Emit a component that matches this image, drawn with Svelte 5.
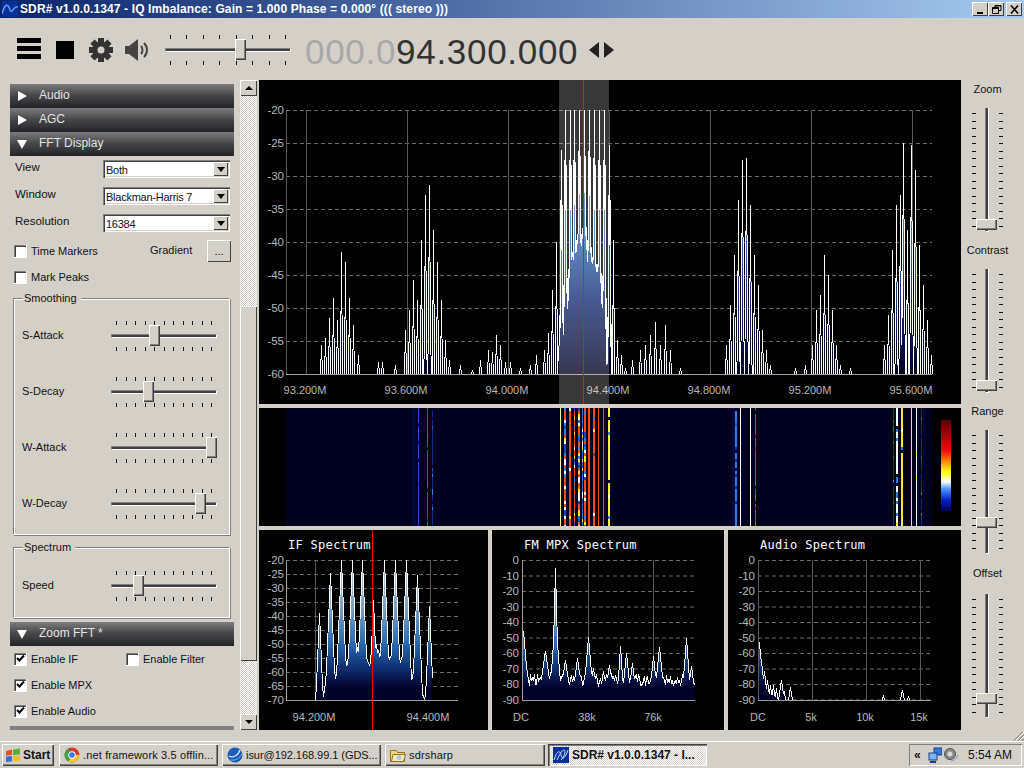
<script>
	// small seeded random so the plots stay the same on every load
	function rng(seed) {
		let s = seed;
		return () => {
			s = (s * 16807) % 2147483647;
			return s / 2147483647;
		};
	}

	function trace(x0, x1, top, base, peaks, floor, noise, seed, slope = 150) {
		const r = rng(seed);
		const pts = [];
		for (let x = x0; x <= x1; x++) {
			const f = floor(x);
			let y = f >= base ? f : f + (r() - 0.5) * noise;
			for (const [px, py, sl] of peaks) {
				y = Math.min(y, py + Math.abs(x - px) * (sl ?? slope));
			}
			pts.push([x, Math.max(top, Math.min(base, y))]);
		}
		return pts;
	}
	const line = (pts) => pts.map((p) => p[0] + 0.5 + ',' + Math.round(p[1])).join(' ');
	const area = (pts, base) =>
		pts[0][0] + ',' + base + ' ' + line(pts) + ' ' + pts[pts.length - 1][0] + ',' + base;

	function lerp(stops, x) {
		if (x <= stops[0][0] || x >= stops[stops.length - 1][0]) return 999;
		for (let i = 1; i < stops.length; i++) {
			if (x <= stops[i][0]) {
				const [a, b] = [stops[i - 1], stops[i]];
				return a[1] + ((b[1] - a[1]) * (x - a[0])) / (b[0] - a[0]);
			}
		}
		return 999;
	}

	// main spectrum, coordinates are relative to the plot box (x - 259, y - 80)
	const mainPeaks = [
		[321, 345], [325, 338], [329, 318], [333, 298], [337, 320], [341, 252], [345, 262], [349, 298],
		[353, 325], [358, 355], [378, 362], [382, 362], [395, 365], [405, 330], [409, 310], [413, 280],
		[417, 300], [421, 240], [425, 195], [429, 185], [433, 230], [437, 262], [441, 300], [445, 340],
		[449, 360], [460, 365], [472, 370], [480, 360], [488, 350], [492, 352], [496, 335], [500, 345],
		[505, 362], [510, 362], [520, 368], [530, 365], [536, 355], [544, 350], [548, 333], [552, 290],
		[556, 242], [561, 150], [565, 110], [570, 110], [574, 110], [579, 110], [584, 110], [589, 110],
		[594, 110], [599, 110], [604, 110], [609, 145], [613, 240], [617, 340], [621, 355], [625, 368],
		[632, 360], [640, 350], [645, 345], [650, 335], [655, 322], [660, 345], [665, 325], [670, 350],
		[680, 368], [726, 345], [730, 305], [734, 255], [738, 200], [742, 160], [746, 158], [750, 205],
		[754, 255], [758, 285], [762, 330], [766, 350], [770, 365], [795, 368], [805, 365], [812, 345],
		[816, 310], [820, 295], [824, 255], [828, 275], [832, 310], [836, 345], [840, 365], [850, 368],
		[884, 345], [888, 315], [892, 250], [896, 205], [900, 195], [903, 143], [907, 230], [911, 145],
		[915, 170], [919, 245], [923, 285], [927, 320], [931, 355]
	].map(([x, y]) => [x - 259, y - 80]);
	const mainFloor = (x) =>
		lerp([[298, 294], [302, 260], [306, 225], [311, 195], [316, 170], [324, 158], [331, 170], [336, 190], [341, 225], [346, 260], [350, 294]], x);
	const mainTrace = trace(27, 673, 30, 294, mainPeaks, mainFloor, 34, 77);
	const centerTrace = mainTrace.filter((p) => p[0] >= 300 && p[0] <= 352);

	const ifPeaks = [
		[60, 83], [71, 43], [82, 30], [93, 30], [103, 30], [114, 70], [125, 30], [136, 30], [147, 30], [158, 45], [170, 76]
	].map(([x, y]) => [x, y, 24]);
	const ifFloor = (x) =>
		lerp([[58, 170], [59, 126], [64, 165], [68, 148], [76, 151], [79, 121], [87, 133], [98, 120], [106, 128], [112, 135],
			[116, 115], [121, 128], [131, 126], [141, 133], [144, 121], [151, 148], [159, 151], [162, 161], [167, 170], [169, 130], [171, 170]], x);
	const ifTrace = trace(56, 173, 30, 170, ifPeaks, ifFloor, 7, 31);

	// mpx and audio peaks were read from a 3x crop, so z / 3 gives plot pixels
	const mpxPeaks = [
		[100, 310, 12], [105, 390, 8], [165, 370, 7], [195, 120, 40], [195, 260, 14], [225, 395, 7], [262, 390, 8], [293, 328, 12],
		[310, 420, 7], [340, 430, 7], [358, 410, 7], [390, 355, 16], [408, 375, 10], [427, 405, 9], [445, 440, 7], [470, 445, 7],
		[490, 385, 10], [507, 358, 10], [520, 450, 7], [540, 445, 7], [560, 448, 7], [587, 330, 14], [603, 415, 8]
	].map(([z, y, s]) => [Math.round(z / 3 - 2), y / 3 - 2, s]);
	const mpxTrace = trace(30, 202, 30, 170, mpxPeaks, () => 150, 13, 53);

	const audioPeaks = [
		[105, 343, 14], [110, 400, 9], [120, 430, 9], [130, 455, 9], [137, 470, 9], [148, 472, 9], [155, 480, 9],
		[170, 455, 7], [180, 490, 9], [198, 478, 7], [478, 500, 5], [533, 487, 5], [553, 505, 5]
	].map(([z, y, s]) => [Math.round(z / 3 - 4), y / 3 - 2, s]);
	const audioTrace = trace(31, 202, 30, 170, audioPeaks, () => 180, 0, 11);

	const mainDb = [-20, -25, -30, -35, -40, -45, -50, -55, -60];
	const mainFreq = ['93.200M', '93.600M', '94.000M', '94.400M', '94.800M', '95.200M', '95.600M'];
	const ifDb = [-20, -25, -30, -35, -40, -45, -50, -55, -60, -65, -70];
	const mpxDb = [0, -10, -20, -30, -40, -50, -60, -70, -80, -90];

	const hot = ['#ffffff', '#2c80e0', '#ffe820', '#1848c0', '#ffffff', '#2c80e0'];
	const cold = ['#2c80e0', '#0a2f9a', '#000040', '#1c5cc4'];
	const pale = ['#ffffff', '#00001f', '#ffe820', '#2c80e0'];

	// waterfall stripes: x, width, colour, noise amount, noise colours
	const stripes = [
		[412, 4, '#00083a', 0, cold], [418, 1, '#1a4fd0', 0.25, cold], [427, 1, '#1c5cc4', 0.25, cold], [432, 1, '#0c2a90', 0.25, cold],
		[560, 1, '#fff6a0', 0, hot], [564, 2, '#ff4a10', 0.55, hot], [569, 2, '#ff4a10', 0.12, hot], [574, 1, '#ff4a10', 0.4, hot],
		[578, 2, '#e8581c', 0.75, hot], [582, 1, '#2c6ed0', 0.5, hot], [584, 2, '#ff4a10', 0.35, hot], [588, 2, '#ff4a10', 0, hot],
		[593, 2, '#ff4a10', 0.12, hot], [598, 1, '#ff4a10', 0, hot], [603, 1, '#ff4a10', 0, hot], [608, 2, '#ffff30', 0.12, pale],
		[732, 3, '#00083a', 0, cold], [735, 2, '#2c80e0', 0.35, cold], [740, 1, '#ffffff', 0, cold], [750, 1, '#ffffff', 0, cold],
		[755, 1, '#2070d8', 0.3, cold], [893, 1, '#0c2a90', 0.2, cold], [896, 2, '#ffffff', 0.4, pale], [901, 2, '#ffe820', 0.15, pale],
		[911, 1, '#ffe820', 0, pale], [916, 1, '#f4f4ff', 0.1, pale], [921, 1, '#0c2a90', 0.2, cold]
	];
	const wfRand = rng(99);
	const speckles = [];
	for (const [x, w, , amount, colours] of stripes) {
		for (let y = 0; y < 118; y += 3) {
			if (wfRand() < amount) {
				speckles.push({ x: x - 259, y, w, c: colours[Math.floor(wfRand() * colours.length)] });
			}
		}
	}

	const vsliders = [
		{ name: 'Zoom', top: 111 },
		{ name: 'Contrast', top: 111 },
		{ name: 'Range', top: 87 },
		{ name: 'Offset', top: 99 }
	];
	const gearTeeth = [0, 45, 90, 135, 180, 225, 270, 315];
</script>

{#snippet hslider(left, width, count)}
	<div class="hslider" style="width:{width}px">
		<div class="ticks">{#each Array(count) as _}<i></i>{/each}</div>
		<div class="htrack"></div>
		<div class="ticks">{#each Array(count) as _}<i></i>{/each}</div>
		<div class="hthumb" style="left:{left}px"></div>
	</div>
{/snippet}

{#snippet combo(text)}
	<div class="combo">
		<span>{text}</span>
		<div class="combo-btn"><b></b></div>
	</div>
{/snippet}

{#snippet check(label, on)}
	<div class="check">
		<div class="box">
			{#if on}
				<svg width="9" height="9" viewBox="0 0 9 9"><path d="M1 4 L3.5 6.5 L8 1.5" fill="none" stroke="#000" stroke-width="2" /></svg>
			{/if}
		</div>
		<span>{label}</span>
	</div>
{/snippet}

{#snippet header(label, open)}
	<div class="panel-head">
		<svg width="12" height="12" viewBox="0 0 12 12">
			{#if open}
				<polygon points="1,2 11,2 6,11" fill="#fff" />
			{:else}
				<polygon points="2,1 11,6 2,11" fill="#fff" />
			{/if}
		</svg>
		<span>{label}</span>
	</div>
{/snippet}

<div class="app">
	<div class="titlebar">
		<svg class="appicon" width="16" height="16" viewBox="0 0 16 16">
			<rect width="16" height="16" fill="#0b2f9a" />
			<path d="M0 13 C3 2 6 2 8 9 C10 14 12 4 16 6" fill="none" stroke="#5aa0f0" stroke-width="1.5" />
		</svg>
		<span class="title">SDR# v1.0.0.1347 - IQ Imbalance: Gain = 1.000 Phase = 0.000° ((( stereo )))</span>
		<div class="winbtns">
			<div class="winbtn"><svg width="13" height="11"><rect x="3" y="8" width="6" height="2" fill="#000" /></svg></div>
			<div class="winbtn"><svg width="13" height="11"><path d="M5 3V1.5H11V6.5H9M2.5 3.5H8.5V9.5H2.5Z M5 2H11 M3 4.500H8" fill="none" stroke="#000" /></svg></div>
			<div class="winbtn close"><svg width="13" height="11"><path d="M3 1.500L10 9.500M10 1.500L3 9.500" stroke="#000" stroke-width="1.600" /></svg></div>
		</div>
	</div>

	<div class="toolbar">
		<svg class="hamburger" width="24" height="22" viewBox="0 0 24 22">
			<rect y="0" width="24" height="5" fill="#000" />
			<rect y="8" width="24" height="5" fill="#000" />
			<rect y="16" width="24" height="5" fill="#000" />
		</svg>
		<div class="stop"></div>
		<svg class="gear" width="24" height="24" viewBox="-12 -12 24 24">
			{#each gearTeeth as a}
				<rect x="-3" y="-12" width="6" height="6" fill="#333" transform="rotate({a})" />
			{/each}
			<circle r="8.500" fill="#333" />
			<circle r="3.500" fill="#d4d0c8" />
		</svg>
		<svg class="speaker" width="25" height="24" viewBox="0 0 25 24">
			<polygon points="0,8 4,8 13,1 13,23 4,16 0,16" fill="#444" />
			<path d="M16 8 C18 10 18 14 16 16" fill="none" stroke="#444" stroke-width="2" />
			<path d="M19 5 C23 9 23 15 19 19" fill="none" stroke="#444" stroke-width="2" />
		</svg>
		<div class="volume">{@render hslider(70, 126, 8)}</div>
		<div class="freq"><span class="freq-off">000.0</span>94.300.000</div>
		<svg class="arrows" width="25" height="16" viewBox="0 0 25 16">
			<polygon points="0,8 10,0 10,16" fill="#222" />
			<polygon points="25,8 15,0 15,16" fill="#222" />
		</svg>
	</div>

	<div class="body">
		<div class="side">
			{@render header('Audio', false)}
			{@render header('AGC', false)}
			{@render header('FFT Display', true)}
			<div class="fft-form">
				<div class="form-row"><label for="">View</label>{@render combo('Both')}</div>
				<div class="form-row"><label for="">Window</label>{@render combo('Blackman-Harris 7')}</div>
				<div class="form-row"><label for="">Resolution</label>{@render combo('16384')}</div>
				<div class="markers">
					{@render check('Time Markers', false)}
					<span class="gradient-label">Gradient</span>
					<div class="dots">...</div>
				</div>
				<div class="peaks">{@render check('Mark Peaks', false)}</div>
				<div class="group smoothing">
					<span class="legend">Smoothing</span>
					<div class="slide-row"><span>S-Attack</span>{@render hslider(38, 106, 11)}</div>
					<div class="slide-row"><span>S-Decay</span>{@render hslider(32, 106, 11)}</div>
					<div class="slide-row"><span>W-Attack</span>{@render hslider(95, 106, 11)}</div>
					<div class="slide-row"><span>W-Decay</span>{@render hslider(84, 106, 11)}</div>
				</div>
				<div class="group spectrum">
					<span class="legend">Spectrum</span>
					<div class="slide-row"><span>Speed</span>{@render hslider(22, 106, 11)}</div>
				</div>
			</div>
			{@render header('Zoom FFT *', true)}
			<div class="zoom-form">
				<div class="zoom-row">{@render check('Enable IF', true)}{@render check('Enable Filter', false)}</div>
				<div class="zoom-row">{@render check('Enable MPX', true)}</div>
				<div class="zoom-row">{@render check('Enable Audio', true)}</div>
			</div>
			<div class="next-head"></div>
		</div>

		<div class="scroll">
			<div class="scroll-btn"><b class="up"></b></div>
			<div class="scroll-gap first"></div>
			<div class="scroll-thumb"></div>
			<div class="scroll-gap"></div>
			<div class="scroll-btn"><b class="down"></b></div>
		</div>

		<div class="plots">
			<svg class="plot-main" width="702" height="324" viewBox="0 0 702 324">
				<defs>
					<linearGradient id="g-main" gradientUnits="userSpaceOnUse" x1="0" y1="30" x2="0" y2="294">
						<stop offset="0" stop-color="#b8d0e0" />
						<stop offset="0.48" stop-color="#2f70b4" />
						<stop offset="0.72" stop-color="#142c74" />
						<stop offset="1" stop-color="#000020" />
					</linearGradient>
					<linearGradient id="g-small" gradientUnits="userSpaceOnUse" x1="0" y1="30" x2="0" y2="170">
						<stop offset="0" stop-color="#c0d4e0" />
						<stop offset="0.35" stop-color="#7aa0c0" />
						<stop offset="0.6" stop-color="#2868b0" />
						<stop offset="0.77" stop-color="#0f3070" />
						<stop offset="0.91" stop-color="#02022e" />
						<stop offset="1" stop-color="#000028" />
					</linearGradient>
				</defs>
				{#each mainDb as d, i}
					<line class="hgrid" x1="27" x2="673" y1={30.5 + i * 33} y2={30.5 + i * 33} />
					<text class="tick" x="25" y={34 + i * 33} text-anchor="end">{d}</text>
				{/each}
				<line class="vgrid" x1="27.500" x2="27.500" y1="30" y2="294" />
				{#each mainFreq as f, i}
					<line class="vgrid" x1={47.5 + i * 101} x2={47.5 + i * 101} y1="30" y2="294" />
					<text class="tick small" x={46 + i * 101} y="314" text-anchor="middle">{f}</text>
				{/each}
				<polygon class="crisp" points={area(mainTrace, 294)} fill="url(#g-main)" />
				<polyline class="crisp" points={line(mainTrace)} fill="none" stroke="#fff" />
				<polyline class="crisp" points={line(centerTrace)} fill="none" stroke="#fff" stroke-width="1.300" />
				<line class="axis" x1="27" x2="673" y1="294.500" y2="294.500" />
				<rect x="300" y="0" width="50" height="324" fill="#fff" fill-opacity="0.22" />
				<line x1="324.500" x2="324.500" y1="0" y2="324" stroke="#d02020" />
			</svg>

			<svg class="waterfall" width="702" height="118" viewBox="0 0 702 118">
				<rect x="27" width="646" height="118" fill="#00001f" />
				{#each stripes as s}
					<rect x={s[0] - 259} width={s[1]} height="118" fill={s[2]} />
				{/each}
				{#each speckles as p}
					<rect x={p.x} y={p.y} width={p.w} height="3" fill={p.c} />
				{/each}
				<defs>
					<linearGradient id="g-bar" x1="0" y1="0" x2="0" y2="1">
						<stop offset="0" stop-color="#580000" />
						<stop offset="0.33" stop-color="#ff0000" />
						<stop offset="0.57" stop-color="#ffff00" />
						<stop offset="0.68" stop-color="#ffffff" />
						<stop offset="0.75" stop-color="#50a0ff" />
						<stop offset="0.88" stop-color="#0020c0" />
						<stop offset="1" stop-color="#000060" />
					</linearGradient>
				</defs>
				<rect x="682" y="12" width="10" height="91" fill="url(#g-bar)" />
			</svg>

			<div class="small-plots">
				<div class="small-plot">
					<span class="plot-title">IF Spectrum</span>
					<svg width="229" height="200" viewBox="0 0 229 200">
						{#each ifDb as d, i}
							<line class="hgrid" x1="27" x2="199" y1={30.5 + i * 14} y2={30.5 + i * 14} />
							<text class="tick" x="25" y={34 + i * 14} text-anchor="end">{d}</text>
						{/each}
						<line class="vgrid" x1="56.500" x2="56.500" y1="30" y2="170" />
						<line class="vgrid" x1="171.500" x2="171.500" y1="30" y2="170" />
						<polygon class="crisp" points={area(ifTrace, 170)} fill="url(#g-small)" />
						<polyline class="crisp" points={line(ifTrace)} fill="none" stroke="#fff" />
						<line class="axis" x1="27" x2="199" y1="170.500" y2="170.500" />
						<line class="axis" x1="27.500" x2="27.500" y1="30" y2="170" />
						<text class="tick small" x="55" y="191" text-anchor="middle">94.200M</text>
						<text class="tick small" x="169" y="191" text-anchor="middle">94.400M</text>
						<line x1="113.500" x2="113.500" y1="0" y2="200" stroke="#ff0000" />
					</svg>
				</div>
				<div class="small-plot mid">
					<span class="plot-title">FM MPX Spectrum</span>
					<svg width="232" height="200" viewBox="0 0 232 200">
						{#each mpxDb as d, i}
							<line class="hgrid" x1="30" x2="202" y1={30.5 + i * 15.5} y2={30.5 + i * 15.5} />
							<text class="tick" x="27" y={34 + i * 15.5} text-anchor="end">{d}</text>
						{/each}
						<line class="vgrid" x1="96.500" x2="96.500" y1="30" y2="170" />
						<line class="vgrid" x1="161.500" x2="161.500" y1="30" y2="170" />
						<polygon class="crisp" points={area(mpxTrace, 170)} fill="url(#g-small)" />
						<polyline class="crisp" points={line(mpxTrace)} fill="none" stroke="#fff" />
						<line class="axis" x1="30" x2="203" y1="170.500" y2="170.500" />
						<line class="axis" x1="30.500" x2="30.500" y1="30" y2="170" />
						<text class="tick small" x="29" y="191" text-anchor="middle">DC</text>
						<text class="tick small" x="95" y="191" text-anchor="middle">38k</text>
						<text class="tick small" x="161" y="191" text-anchor="middle">76k</text>
					</svg>
				</div>
				<div class="small-plot last">
					<span class="plot-title">Audio Spectrum</span>
					<svg width="233" height="200" viewBox="0 0 233 200">
						{#each mpxDb as d, i}
							<line class="hgrid" x1="30" x2="203" y1={30.5 + i * 15.5} y2={30.5 + i * 15.5} />
							<text class="tick" x="27" y={34 + i * 15.5} text-anchor="end">{d}</text>
						{/each}
						<line class="vgrid" x1="30.500" x2="30.500" y1="30" y2="170" />
						<line class="vgrid" x1="84.500" x2="84.500" y1="30" y2="170" />
						<line class="vgrid" x1="138.500" x2="138.500" y1="30" y2="170" />
						<line class="vgrid" x1="192.500" x2="192.500" y1="30" y2="170" />
						<polygon class="crisp" points={area(audioTrace, 170)} fill="url(#g-small)" />
						<polyline class="crisp" points={line(audioTrace)} fill="none" stroke="#fff" />
						<line class="axis" x1="30" x2="203" y1="170.500" y2="170.500" />
						<text class="tick small" x="30" y="191" text-anchor="middle">DC</text>
						<text class="tick small" x="83" y="191" text-anchor="middle">5k</text>
						<text class="tick small" x="137" y="191" text-anchor="middle">10k</text>
						<text class="tick small" x="191" y="191" text-anchor="middle">15k</text>
					</svg>
				</div>
			</div>
		</div>

		<div class="vcol">
			{#each vsliders as s}
				<div class="vblock">
					<span>{s.name}</span>
					<div class="vslider">
						<div class="vticks">{#each Array(16) as _}<i></i>{/each}</div>
						<div class="vtrack"></div>
						<div class="vticks">{#each Array(16) as _}<i></i>{/each}</div>
						<div class="vthumb" style="top:{s.top}px"></div>
					</div>
				</div>
			{/each}
		</div>

		<svg class="grip" width="12" height="9" viewBox="0 0 12 9">
			<path d="M2 9L11 0M6 9L12 3M10 9L12 7" stroke="#808080" stroke-width="1.200" />
			<path d="M3 9L12 0M7 9L12 4" stroke="#fff" />
		</svg>
	</div>

	<div class="taskbar">
		<div class="tb-btn start">
			<svg width="16" height="15" viewBox="0 0 16 15">
				<path d="M1 3 L7 1.500 V7 L1 7.500Z" fill="#e8501c" />
				<path d="M8 1.500 L15 0.500 V6.500 L8 7Z" fill="#5cb030" />
				<path d="M1 8.500 L7 8 V13.500 L1 14Z" fill="#3a70d8" />
				<path d="M8 8 L15 7.500 V13 L8 13.500Z" fill="#f4c020" />
			</svg>
			<b>Start</b>
		</div>
		<div class="tb-btn task">
			<svg width="16" height="16" viewBox="-8 -8 16 16">
				<circle r="7.500" fill="#d8382c" />
				<path d="M0 0 L7.500 0 A7.500 7.500 0 0 1 -3.700 6.500Z" fill="#f4c430" />
				<path d="M0 0 L-3.700 6.500 A7.500 7.500 0 0 1 -3.700 -6.500Z" fill="#3aa648" />
				<circle r="3.800" fill="#fff" />
				<circle r="2.800" fill="#3a78e0" />
			</svg>
			<span>.net framework 3.5 offlin...</span>
		</div>
		<div class="tb-btn task">
			<svg width="16" height="16" viewBox="0 0 16 16">
				<circle cx="8" cy="8" r="7.500" fill="#1c5cb8" />
				<path d="M2 9 C6 11 11 9 13 3" fill="none" stroke="#cfe4fa" stroke-width="1.300" />
				<path d="M4 13 C8 14 13 11 15 7" fill="none" stroke="#7fb2ea" />
			</svg>
			<span class="tight">isur@192.168.99.1 (GDS...</span>
		</div>
		<div class="tb-btn task wide">
			<svg width="16" height="15" viewBox="0 0 16 15">
				<path d="M0.500 2.500H6L7.500 4.500H14.500V13.500H0.500Z" fill="#f2d878" stroke="#8a7020" />
				<path d="M3 6.500H15.500L13.500 13.500H1.500Z" fill="#fbeeb0" stroke="#8a7020" />
				<circle cx="9" cy="9.500" r="2.500" fill="#a8c8ee" />
			</svg>
			<span>sdrsharp</span>
		</div>
		<div class="tb-btn task active">
			<svg width="16" height="16" viewBox="0 0 16 16">
				<rect width="16" height="16" fill="#0b2f9a" />
				<path d="M1 13 C4 3 7 3 8 8 C9 13 12 12 15 3" fill="none" stroke="#cfe4fa" />
				<path d="M4 13 C6 8 9 3 11 3 C13 3 12 9 8 13" fill="none" stroke="#cfe4fa" />
			</svg>
			<b>SDR# v1.0.0.1347 - I...</b>
		</div>
		<div class="tray">
			<b class="chev">«</b>
			<svg width="14" height="16" viewBox="0 0 14 16">
				<rect x="6" y="1" width="8" height="7" fill="#3a78d8" stroke="#18408c" />
				<rect x="1" y="6" width="8" height="7" fill="#7ab4f0" stroke="#18408c" />
				<rect x="2" y="14" width="6" height="2" fill="#18408c" />
			</svg>
			<svg width="15" height="16" viewBox="0 0 15 16">
				<circle cx="6" cy="7" r="5.500" fill="#8a8a8a" stroke="#505050" />
				<circle cx="6" cy="7" r="2.500" fill="#d8d8d8" />
				<path d="M7 14 C10 14 13 11 14 8" fill="none" stroke="#7a86d0" />
			</svg>
			<span>5:54 AM</span>
		</div>
	</div>
</div>

<style>
	:global(body) {
		margin: 0;
	}

	.app {
		width: 1024px;
		height: 768px;
		display: flex;
		flex-direction: column;
		overflow: hidden;
		background: #d4d0c8;
		color: #111;
		font-family: 'Liberation Sans', sans-serif;
		font-size: 11px;
	}

	.titlebar {
		height: 18px;
		display: flex;
		align-items: center;
		background: linear-gradient(90deg, #0a246a, #a6caf0);
		color: #fff;
	}
	.appicon {
		margin: 0 2px;
		flex: none;
	}
	.title {
		font-weight: bold;
		font-size: 12px;
		white-space: nowrap;
		letter-spacing: 0.12px;
	}
	.winbtns {
		margin-left: auto;
		margin-right: 2px;
		display: flex;
	}
	.winbtn {
		width: 16px;
		height: 14px;
		display: flex;
		align-items: center;
		justify-content: center;
		background: #d4d0c8;
		box-shadow: inset 1px 1px 0 #fff, inset -1px -1px 0 #404040;
	}
	.winbtn.close {
		margin-left: 2px;
	}

	.toolbar {
		height: 62px;
		display: flex;
		align-items: center;
		flex: none;
	}
	.hamburger {
		margin-left: 17px;
	}
	.stop {
		width: 18px;
		height: 18px;
		background: #000;
		margin-left: 15px;
		margin-top: 1px;
	}
	.gear {
		margin-left: 15px;
		margin-top: 1px;
	}
	.speaker {
		margin-left: 12px;
		margin-top: 1px;
	}
	.volume {
		margin-left: 15px;
		margin-top: 1px;
	}
	.freq {
		margin-left: 14px;
		font-size: 35px;
		letter-spacing: 0.7px;
		color: #333;
		white-space: nowrap;
		margin-top: 6px;
	}
	.freq-off {
		color: #a8a8a8;
	}
	.arrows {
		margin-left: 11px;
		margin-top: 2px;
	}

	.body {
		height: 661px;
		display: flex;
		flex: none;
		position: relative;
	}

	.side {
		width: 224px;
		margin-left: 10px;
		margin-right: 6px;
		padding-top: 4px;
		flex: none;
	}
	.panel-head {
		height: 24px;
		display: flex;
		align-items: center;
		gap: 11px;
		padding-left: 6px;
		background: linear-gradient(#7c7c7c, #4a4a4c 45%, #232428);
		color: #e4e4e4;
		font-size: 12px;
	}
	.panel-head span {
		margin-bottom: 2px;
	}
	.fft-form {
		height: 466px;
		padding-top: 4px;
		box-sizing: border-box;
	}
	.form-row {
		height: 27px;
		display: flex;
		align-items: flex-start;
		padding-left: 5px;
	}
	.form-row label {
		width: 88px;
		font-size: 11.500px;
		margin-top: 1px;
	}
	.combo {
		width: 127px;
		height: 18px;
		box-sizing: border-box;
		display: flex;
		align-items: center;
		justify-content: space-between;
		background: #fff;
		box-shadow: inset 1px 1px 0 #808080, inset 2px 2px 0 #404040, inset -1px -1px 0 #fff, inset -2px -2px 0 #d4d0c8;
		padding: 0 2px 0 3px;
		letter-spacing: -0.25px;
	}
	.combo span {
		margin-top: 2px;
	}
	.combo-btn {
		width: 15px;
		height: 14px;
		display: flex;
		align-items: center;
		justify-content: center;
		background: #d4d0c8;
		box-shadow: inset 1px 1px 0 #fff, inset -1px -1px 0 #404040;
	}
	.combo-btn b {
		border: 4px solid transparent;
		border-top: 5px solid #000;
		border-bottom: 0;
	}
	.markers {
		height: 22px;
		margin-top: -1px;
		display: flex;
		align-items: center;
		padding-left: 4px;
	}
	.markers :global(.check) {
		width: 136px;
	}
	.gradient-label {
		width: 57px;
		margin-bottom: 3px;
	}
	.dots {
		width: 24px;
		height: 22px;
		display: flex;
		align-items: center;
		justify-content: center;
		background: #d4d0c8;
		box-shadow: inset 1px 1px 0 #fff, inset -1px -1px 0 #404040;
	}
	.peaks {
		height: 26px;
		display: flex;
		align-items: center;
		padding-left: 4px;
		margin-top: 2px;
	}
	.check {
		display: flex;
		align-items: center;
		gap: 4px;
	}
	.box {
		width: 12px;
		height: 12px;
		display: flex;
		align-items: center;
		justify-content: center;
		background: #fff;
		box-shadow: inset 1px 1px 0 #808080, inset 2px 2px 0 #404040;
		border-right: 1px solid #fff;
		border-bottom: 1px solid #fff;
	}
	.group {
		position: relative;
		margin-left: 3px;
		width: 217px;
		box-sizing: border-box;
		border: 1px solid #808080;
		border-right-color: #fff;
		border-bottom-color: #fff;
		box-shadow: inset 1px 1px 0 #fff, 1px 1px 0 #808080;
	}
	.smoothing {
		height: 237px;
		margin-top: 8px;
		padding-top: 9px;
	}
	.spectrum {
		height: 71px;
		margin-top: 12px;
		padding-top: 10px;
	}
	.legend {
		position: absolute;
		left: 9px;
		top: -7px;
		padding: 0 4px 0 1px;
		background: #d4d0c8;
	}
	.slide-row {
		height: 56px;
		display: flex;
		align-items: center;
		padding-left: 8px;
	}
	.slide-row span {
		width: 89px;
		margin-bottom: 2px;
	}
	.hslider {
		position: relative;
		height: 30px;
		display: flex;
		flex-direction: column;
		justify-content: space-between;
	}
	.ticks {
		display: flex;
		justify-content: space-between;
		padding: 0 5px;
		height: 4px;
	}
	.ticks i {
		width: 1px;
		height: 4px;
		background: #111;
	}
	.htrack {
		height: 4px;
		box-sizing: border-box;
		border: 1px solid #404040;
		border-top-color: #808080;
		border-bottom-color: #fff;
		border-right-color: #fff;
		border-left-color: #808080;
		background: #404040;
	}
	.hthumb {
		position: absolute;
		top: 4px;
		width: 11px;
		height: 21px;
		box-sizing: border-box;
		background: #d4d0c8;
		box-shadow: inset 1px 1px 0 #fff, inset -1px -1px 0 #404040, inset -2px -2px 0 #808080;
	}
	.zoom-form {
		height: 80px;
	}
	.zoom-row {
		height: 26px;
		display: flex;
		align-items: center;
		padding-left: 4px;
	}
	.zoom-row :global(.check:first-child) {
		width: 112px;
	}
	.next-head {
		height: 4px;
		background: #808080;
	}

	.scroll {
		width: 17px;
		height: 650px;
		display: flex;
		flex-direction: column;
		flex: none;
	}
	.scroll-btn {
		height: 16px;
		display: flex;
		align-items: center;
		justify-content: center;
		background: #d4d0c8;
		box-shadow: inset 1px 1px 0 #fff, inset -1px -1px 0 #404040;
	}
	.scroll-btn b {
		border: 4px solid transparent;
	}
	.up {
		border-top: 0 !important;
		border-bottom-color: #000 !important;
	}
	.down {
		border-bottom: 0 !important;
		border-top-color: #000 !important;
	}
	.scroll-gap {
		height: 53px;
		background: repeating-conic-gradient(#fff 0 25%, #d4d0c8 0 50%) 0 0 / 2px 2px;
	}
	.scroll-gap.first {
		height: 210px;
	}
	.scroll-thumb {
		height: 355px;
		background: #d4d0c8;
		box-shadow: inset 1px 1px 0 #fff, inset -1px -1px 0 #404040;
	}

	.plots {
		width: 702px;
		margin-left: 2px;
		flex: none;
		display: flex;
		flex-direction: column;
		gap: 4px;
	}
	.plots svg {
		display: block;
		background: #000;
		flex: none;
	}
	.small-plots {
		display: flex;
		gap: 4px;
	}
	.small-plot {
		position: relative;
		width: 229px;
		height: 200px;
	}
	.small-plot.mid {
		width: 232px;
	}
	.small-plot.last {
		width: 233px;
	}
	.plot-title {
		position: absolute;
		left: 29px;
		top: 8px;
		z-index: 1;
		color: #fff;
		font-family: 'DejaVu Sans Mono', monospace;
		font-size: 12px;
		letter-spacing: 0.3px;
		white-space: pre;
	}
	.mid .plot-title {
		left: 32px;
	}
	.last .plot-title {
		left: 32px;
	}
	.hgrid {
		stroke: #6c6c6c;
		stroke-dasharray: 4 3;
	}
	.vgrid {
		stroke: #585858;
	}
	.axis {
		stroke: #a0a0a0;
	}
	.crisp {
		shape-rendering: crispEdges;
	}
	.tick {
		fill: #b8b8b8;
		font-family: 'Liberation Sans', sans-serif;
		font-size: 11.500px;
	}
	.tick.small {
		font-size: 11px;
	}

	.vcol {
		width: 63px;
		flex: none;
	}
	.vblock {
		height: 161px;
		display: flex;
		flex-direction: column;
		align-items: center;
	}
	.vblock span {
		height: 18px;
		line-height: 18px;
		margin-right: 10px;
	}
	.vblock:last-child {
		padding-top: 1px;
	}
	.vslider {
		position: relative;
		width: 63px;
		height: 124px;
		margin-top: 10px;
		display: flex;
		padding-left: 11px;
		box-sizing: border-box;
	}
	.vblock:last-child .vslider {
		margin-top: 12px;
	}
	.vticks {
		width: 4px;
		height: 124px;
		box-sizing: border-box;
		padding: 5px 0;
		display: flex;
		flex-direction: column;
		justify-content: space-between;
	}
	.vticks i {
		width: 4px;
		height: 1px;
		background: #111;
	}
	.vtrack {
		width: 4px;
		margin: 0 10px 0 9px;
		box-sizing: border-box;
		border-left: 1px solid #808080;
		border-right: 1px solid #fff;
		border-bottom: 1px solid #fff;
		background: #404040;
	}
	.vthumb {
		position: absolute;
		left: 15px;
		width: 21px;
		height: 11px;
		background: #d4d0c8;
		box-shadow: inset 1px 1px 0 #fff, inset -1px -1px 0 #404040, inset -2px -2px 0 #808080;
	}
	.grip {
		position: absolute;
		right: 0;
		bottom: 0;
	}

	.taskbar {
		height: 27px;
		box-sizing: border-box;
		border-top: 1px solid #fff;
		padding: 2px 2px 0;
		display: flex;
		flex: none;
		gap: 4px;
		align-items: flex-start;
		font-size: 12px;
	}
	.tb-btn {
		height: 22px;
		box-sizing: border-box;
		display: flex;
		align-items: center;
		background: #d4d0c8;
		box-shadow: inset 1px 1px 0 #fff, inset -1px -1px 0 #404040, inset -2px -2px 0 #808080;
		white-space: nowrap;
		overflow: hidden;
		flex: none;
	}
	.tb-btn svg {
		flex: none;
	}
	.start {
		width: 52px;
		padding-left: 3px;
		gap: 2px;
		margin-right: 1px;
	}
	.task {
		width: 159px;
		padding-left: 5px;
		gap: 3px;
	}
	.task span {
		font-size: 11px;
		letter-spacing: 0.15px;
	}
	.task span.tight {
		letter-spacing: -0.05px;
	}
	.task.wide {
		width: 160px;
		margin-right: -1px;
	}
	.task.active {
		box-shadow: inset 1px 1px 0 #404040, inset 2px 2px 0 #808080, inset -1px -1px 0 #fff;
		background: repeating-conic-gradient(#fff 0 25%, #d4d0c8 0 50%) 0 0 / 2px 2px;
	}
	.tray {
		margin-left: auto;
		width: 113px;
		height: 22px;
		box-sizing: border-box;
		display: flex;
		align-items: center;
		padding-left: 5px;
		box-shadow: inset 1px 1px 0 #808080, inset -1px -1px 0 #fff;
	}
	.chev {
		width: 14px;
	}
	.tray svg {
		margin-right: 2px;
	}
	.tray span {
		margin-left: 7px;
	}
</style>
